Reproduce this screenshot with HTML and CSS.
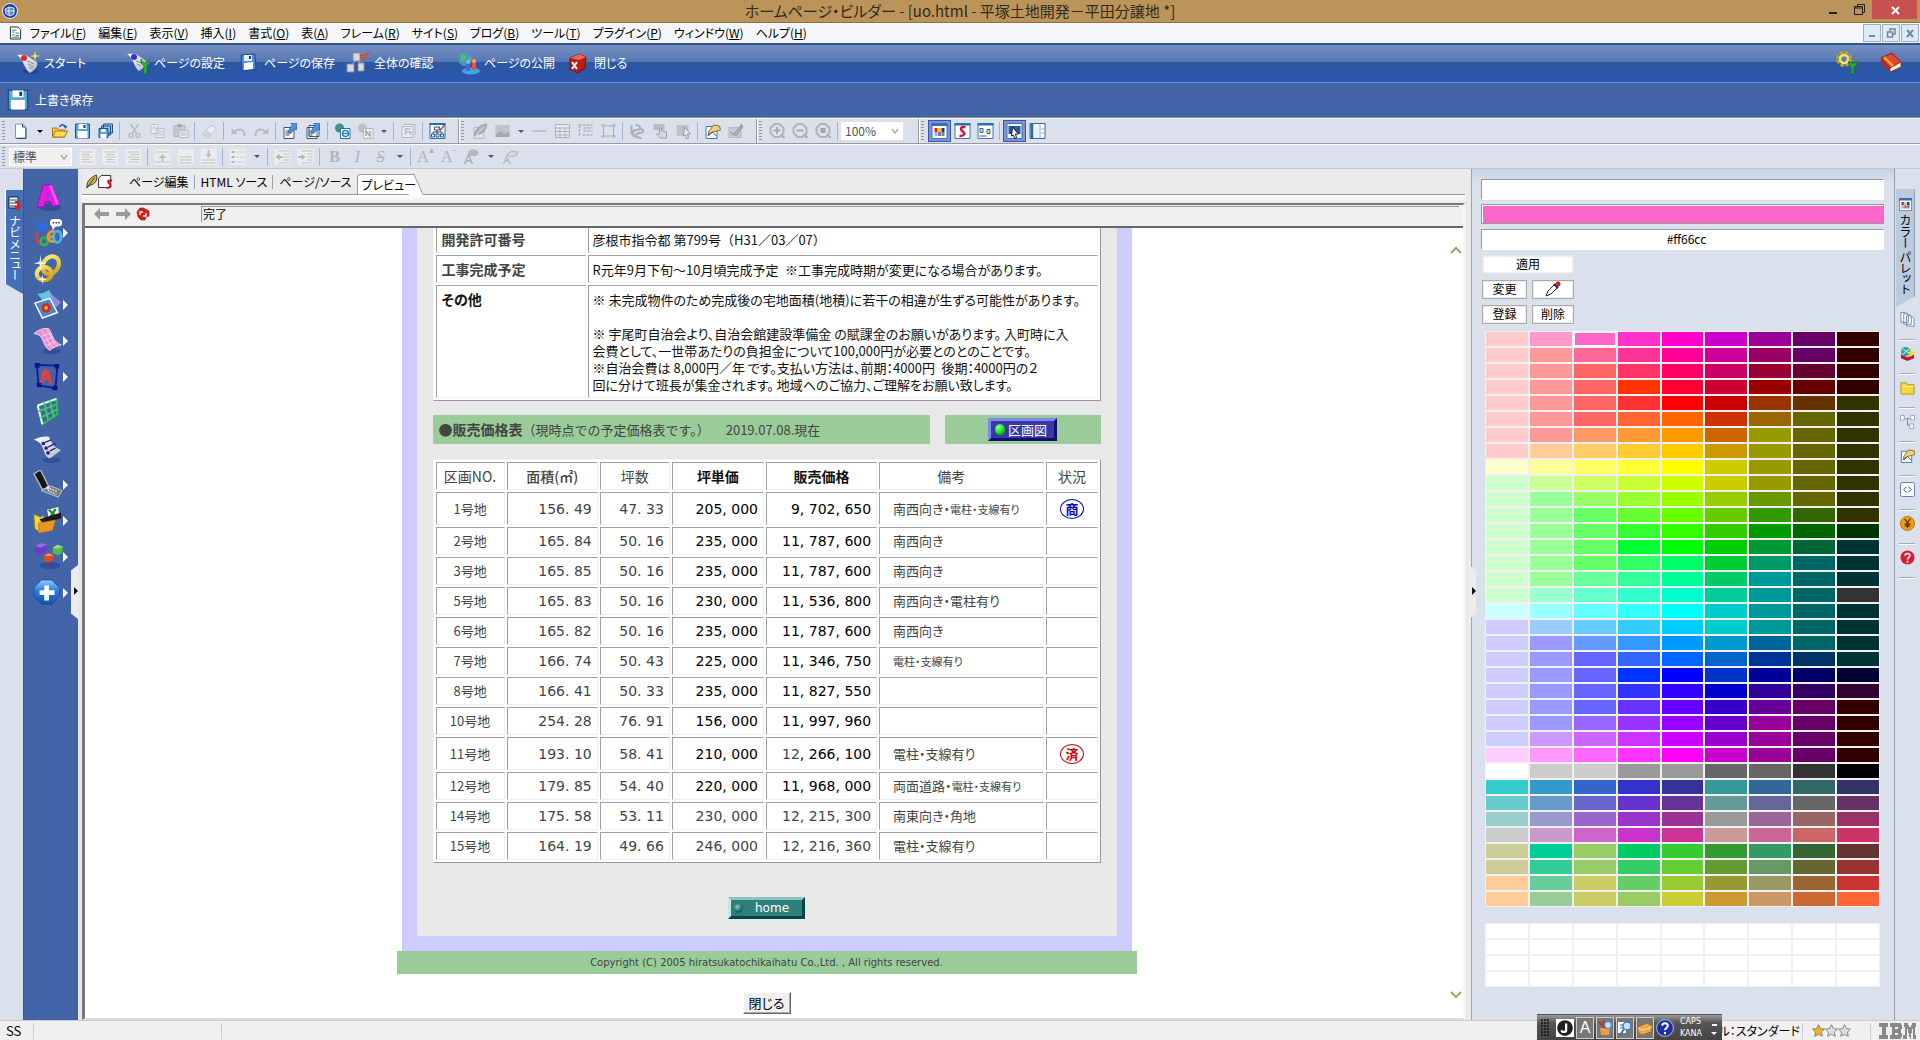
FILE: index.html
```html
<!DOCTYPE html>
<html lang="ja">
<head>
<meta charset="utf-8">
<title>ホームページ・ビルダー</title>
<link rel="stylesheet" href="styles.css">
</head>
<body>
<svg class="defs" aria-hidden="true">
  <defs>
    <linearGradient id="gold" x1="0" y1="0" x2="1" y2="1"><stop offset="0" stop-color="#fff07a"/><stop offset="1" stop-color="#c99a10"/></linearGradient>
    <linearGradient id="paper" x1="0" y1="0" x2="1" y2="1"><stop offset="0" stop-color="#fff"/><stop offset="1" stop-color="#b9bcc8"/></linearGradient>
    <linearGradient id="blueball" x1="0" y1="0" x2="0" y2="1"><stop offset="0" stop-color="#8fd0ff"/><stop offset=".45" stop-color="#2a7be0"/><stop offset="1" stop-color="#1250a8"/></linearGradient>
  </defs>
  <symbol id="floppy" viewBox="0 0 16 16"><path d="M1 1h14v14H1z" fill="#5aa8d8" stroke="#1c4f86"/><path d="M4 1h8v5H4z" fill="#fff"/><path d="M9 2h2v3H9z" fill="#1c2f66"/><path d="M3 8h10v7H3z" fill="#fff"/></symbol>
  <symbol id="doc" viewBox="0 0 16 16"><path d="M3 1h7l3 3v11H3z" fill="#fff" stroke="#7c98c0"/><path d="M10 1v3h3M13.500 5v10.500H4" fill="none" stroke="#2d4a78"/></symbol>
  <symbol id="open" viewBox="0 0 16 16"><path d="M1 5h5l1 2h6v7H1z" fill="#f6c94a" stroke="#a87808"/><path d="M1 14l3-6h12l-3 6z" fill="#ffd95e" stroke="#a87808"/><path d="M8 4c1-3 5-3 6 0" fill="none" stroke="#245a9c" stroke-width="1.500"/><path d="M12 3h4l-2 3z" fill="#245a9c"/></symbol>
  <symbol id="saveall" viewBox="0 0 16 16"><path d="M6 1h9v9H6zM4 3h9v9H4z" fill="#8cc6ea" stroke="#1c4f86"/><path d="M1.500 5.500h9v9h-9z" fill="#5aa8d8" stroke="#1c4f86"/><path d="M4 6h4v3H4zM3 11h6v4H3z" fill="#fff"/></symbol>
  <symbol id="cut" viewBox="0 0 16 16"><path d="M4 1l6 9M12 1L6 10" stroke="#b8bcc3" stroke-width="1.500"/><circle cx="4.500" cy="12.500" r="2" fill="none" stroke="#b8bcc3" stroke-width="1.500"/><circle cx="11.500" cy="12.500" r="2" fill="none" stroke="#b8bcc3" stroke-width="1.500"/></symbol>
  <symbol id="copy" viewBox="0 0 16 16"><path d="M1.500 1.500h7v9h-7zM6.500 5.500h8v9h-8z" fill="#eceef0" stroke="#bcc0c6"/><path d="M8 8h5M8 10h5M8 12h5M3 4h4M3 6h3" stroke="#bcc0c6"/></symbol>
  <symbol id="paste" viewBox="0 0 16 16"><path d="M1.500 2.500h11v11h-11z" fill="#c4c7cb" stroke="#b4b7bc"/><path d="M5 1h4v3H5z" fill="#a4a8ad"/><path d="M6.500 7.500h9v7h-9z" fill="#eee" stroke="#b4b8bf"/><path d="M8 10h6M8 12h6" stroke="#b4b8bf"/></symbol>
  <symbol id="eraser" viewBox="0 0 16 16"><path d="M1 11L10 2l5 4-9 9z" fill="#eee" stroke="#b9bcc2"/><path d="M1 11l4-4 5 4-4 4z" fill="#cfd2d6"/></symbol>
  <symbol id="undo" viewBox="0 0 16 16"><path d="M1 5v6h6z" fill="#b8bcc3"/><path d="M4 9c3-4 8-3 10 1v3" fill="none" stroke="#b8bcc3" stroke-width="2"/></symbol>
  <symbol id="redo" viewBox="0 0 16 16"><path d="M15 5v6H9z" fill="#b8bcc3"/><path d="M12 9C9 5 4 6 2 10v3" fill="none" stroke="#b8bcc3" stroke-width="2"/></symbol>
  <symbol id="export" viewBox="0 0 16 16"><path d="M1.500 4.500h10v11h-10z" fill="#fff" stroke="#3c567c"/><path d="M3 8h6M3 10h6M3 12h4" stroke="#3c567c"/><path d="M6 10c3 0 5-2 6-4l2 1V0H8l2 2C8 4 6 6 6 10z" fill="#4a94e4" stroke="#1d4c8c" stroke-width=".6"/></symbol>
  <symbol id="exportall" viewBox="0 0 16 16"><path d="M3.500 2.500h10v11h-10zM1.500 4.500h10v11h-10z" fill="#fff" stroke="#3c567c"/><path d="M3 8h6M3 10h6M3 12h4" stroke="#3c567c"/><path d="M6 10c3 0 5-2 6-4l2 1V0H8l2 2C8 4 6 6 6 10z" fill="#4a94e4" stroke="#1d4c8c" stroke-width=".6"/></symbol>
  <symbol id="ie" viewBox="0 0 16 16"><circle cx="5" cy="5" r="4.500" fill="#2f9a62"/><path d="M2 3l3 1-1 3" fill="none" stroke="#5b7de0" stroke-width="2"/><path d="M6 5.500h9.500v10H6z" fill="#fff" stroke="#3c6c9c"/><circle cx="11" cy="10.500" r="3" fill="none" stroke="#2a8ac8" stroke-width="1.600"/><path d="M8 10.500h6" stroke="#2a8ac8" stroke-width="1.400"/></symbol>
  <symbol id="nn" viewBox="0 0 16 16"><circle cx="5" cy="5" r="4.500" fill="#bcc0c5"/><path d="M6 5.500h9.500v10H6z" fill="#eee" stroke="#b4b8bf"/><path d="M8.500 13V8l4 5V8" fill="none" stroke="#a6aab0" stroke-width="1.500"/></symbol>
  <symbol id="frame" viewBox="0 0 16 16"><path d="M3 1.500h11.500V12M1.500 3.500h11v11h-11z" fill="#eceef0" stroke="#b4b8bf"/><path d="M5 12V6h5M5 9h4M10 12V8" fill="none" stroke="#b4b8bf" stroke-width="1.500"/></symbol>
  <symbol id="sitemap" viewBox="0 0 16 16"><path d="M.500.500h15v15H.500z" fill="#f4fbff" stroke="#2470b0"/><path d="M0 0h16v2H0z" fill="#2470b0"/><path d="M5 4h5v3H5zM2 11h3v3H2zM6.500 11h3v3h-3zM11 11h3v3h-3zM7.500 7v4M3.500 11V9h9v2" fill="none" stroke="#2d4f80"/><path d="M9 4l2 3 4-5" fill="none" stroke="#b0522c" stroke-width="1.500"/></symbol>
  <symbol id="leaf" viewBox="0 0 16 16"><path d="M2.500 4.500h10v11h-10z" fill="#dfe2e5" stroke="#b4b8bf"/><path d="M3 13C4 5 9 2 15 1c0 6-4 10-9 10z" fill="#b0b4b9" stroke="#9599a0"/><path d="M3 14L12 4" stroke="#ddd"/></symbol>
  <symbol id="image" viewBox="0 0 16 16"><path d="M1 2h14v12H1z" fill="#c0c3c7"/><path d="M1 12l5-4 4 3 5-2v5H1z" fill="#a4a7ac"/></symbol>
  <symbol id="rule" viewBox="0 0 16 16"><path d="M1 8h14" stroke="#b4b8bf" stroke-width="1.500"/></symbol>
  <symbol id="table" viewBox="0 0 16 16"><path d="M1 1.500h14v13H1zM1 5h14M1 8.500h14M1 12h14M5.500 4v11M10.500 4v11" fill="#e6e9ed" stroke="#b0b4ba"/></symbol>
  <symbol id="layout" viewBox="0 0 16 16"><path d="M1 2h14M2 2v12M6 5h9M6 8h9M5 12h10" fill="none" stroke="#b0b4ba" stroke-width="1.500" stroke-dasharray="3 1"/></symbol>
  <symbol id="bounds" viewBox="0 0 16 16"><path d="M3 3h10v10H3z" fill="none" stroke="#a9adb3"/><path d="M1 1h3v3H1zM12 1h3v3h-3zM1 12h3v3H1zM12 12h3v3h-3z" fill="#b9bcc0"/></symbol>
  <symbol id="links" viewBox="0 0 16 16"><path d="M2 2v8l4-3M6 2c6 0 6 5 1 5s-5 6 0 7M10 6c5 0 5 4 0 4s-4 5 2 5" fill="none" stroke="#adb1b6" stroke-width="2"/></symbol>
  <symbol id="hand" viewBox="0 0 16 16"><path d="M1 1h11v6H1z" fill="#b8bcc0"/><path d="M7 5v6H4l4 4h6V9L9 8V5z" fill="#d8dadd" stroke="#9da1a6"/></symbol>
  <symbol id="pointimg" viewBox="0 0 16 16"><path d="M1 2h12v11H1z" fill="#bec1c5"/><path d="M9 4l6 7h-3l1 4-2 1-1-4-2 1z" fill="#e8e8e8" stroke="#999"/></symbol>
  <symbol id="handwrite" viewBox="0 0 16 16"><path d="M1.500 3.500h11v12h-11z" fill="#fff" stroke="#3c7cb4"/><path d="M4 9l5-7 6 1 1 4-8 2-4 4z" fill="#f4cf70" stroke="#8c7040"/><path d="M3 12l5-3 4 4" fill="none" stroke="#2f5784"/></symbol>
  <symbol id="edit" viewBox="0 0 16 16"><path d="M1.500 4.500h12v10h-12z" fill="#c8cbd0" stroke="#b4b8bf"/><path d="M6 12l8-10 1 2-7 9M3 9l3 3" fill="none" stroke="#9da1a6" stroke-width="1.600"/></symbol>
  <symbol id="zoomin" viewBox="0 0 16 16"><path d="M5 1h5l4 4v5l-4 4H5l-4-4V5z" fill="#dfe3e8" stroke="#b0b4b9" stroke-width="2"/><path d="M7.500 4v7M4 7.500h7M12 12l3 3" stroke="#a8acb1" stroke-width="2"/></symbol>
  <symbol id="zoomout" viewBox="0 0 16 16"><path d="M5 1h5l4 4v5l-4 4H5l-4-4V5z" fill="#dfe3e8" stroke="#b0b4b9" stroke-width="2"/><path d="M4 7.500h7M12 12l3 3" stroke="#a8acb1" stroke-width="2"/></symbol>
  <symbol id="zoomfit" viewBox="0 0 16 16"><path d="M5 1h5l4 4v5l-4 4H5l-4-4V5z" fill="#dfe3e8" stroke="#b0b4b9" stroke-width="2"/><path d="M5 5h5v5H5z" fill="#a2a6ab"/><path d="M12 12l3 3" stroke="#a8acb1" stroke-width="2"/></symbol>
  <symbol id="palette" viewBox="0 0 16 16"><path d="M.500.500h15v15H.500z" fill="#fff" stroke="#3c78b0"/><path d="M0 0h16v3H0z" fill="#2d72b4"/><path d="M3 5h3v4H3z" fill="#d8202c"/><path d="M6.500 5h3v4h-3z" fill="#e8c820"/><path d="M10 5h3v4h-3z" fill="#1b2fb8"/><path d="M3 9h3v4H3z" fill="#70c8e8"/><path d="M6.500 9h3v4h-3z" fill="#c04cc0"/><path d="M10 9h3v4h-3z" fill="#48a840"/></symbol>
  <symbol id="stylesheet" viewBox="0 0 16 16"><path d="M.500.500h15v15H.500z" fill="#fff" stroke="#3c78b0"/><path d="M0 0h16v2.500H0z" fill="#2d72b4"/><path d="M11 4H8C5 5 7 8 9 9c2 2 0 4-4 4" fill="none" stroke="#d81038" stroke-width="2.400"/></symbol>
  <symbol id="parts" viewBox="0 0 16 16"><path d="M.500.500h15v15H.500z" fill="#fff" stroke="#3c78b0"/><path d="M0 0h16v2.500H0z" fill="#2d72b4"/><path d="M2.500 5.500h3v4h-3z" fill="#cfe6fa" stroke="#2d5f98"/><path d="M9.500 6.500h3v4h-3z" fill="#ece44c" stroke="#2d5f98"/><path d="M2 13h7" stroke="#2d5f98"/></symbol>
  <symbol id="pointer" viewBox="0 0 16 16"><path d="M.500.500h15v15H.500z" fill="#e9f2fb" stroke="#3c78b0"/><path d="M2 3h12v8H2z" fill="#31569a"/><path d="M6 4l6 7H9l1 4-2 .500L7 12l-2 1z" fill="#fff" stroke="#123"/></symbol>
  <symbol id="sidepane" viewBox="0 0 16 16"><path d="M.500.500h15v15H.500z" fill="#fff" stroke="#2c6ba8"/><path d="M1 1h3v14H1z" fill="#2c6ba8"/><path d="M4 1h6v14H4z" fill="#e8f2fb"/><path d="M10.500 1v14M11 6h4M11 10h4" stroke="#8fb4d8"/></symbol>
  <symbol id="al-left" viewBox="0 0 16 16"><path d="M0 0h16v16H0z" fill="#ececec"/><path d="M2 3h11M2 5.500h8M2 8h11M2 10.500h8M2 13h11" stroke="#c4c4c4"/></symbol>
  <symbol id="al-center" viewBox="0 0 16 16"><path d="M0 0h16v16H0z" fill="#ececec"/><path d="M2 3h12M4 5.500h8M2 8h12M4 10.500h8M3 13h10" stroke="#c4c4c4"/></symbol>
  <symbol id="al-right" viewBox="0 0 16 16"><path d="M0 0h16v16H0z" fill="#ececec"/><path d="M2 3h12M5 5.500h9M2 8h12M5 10.500h9M3 13h11" stroke="#c4c4c4"/></symbol>
  <symbol id="v-top" viewBox="0 0 16 16"><path d="M0 0h16v16H0z" fill="#ececec"/><path d="M1 3h14M1 13h14" stroke="#c0c0c0"/><path d="M8 5l4 4H9v3H7V9H4z" fill="#bdbdbd"/></symbol>
  <symbol id="v-mid" viewBox="0 0 16 16"><path d="M0 0h16v16H0z" fill="#ececec"/><path d="M2 8h12M2 11h12M2 14h12" stroke="#c0c0c0"/></symbol>
  <symbol id="v-bot" viewBox="0 0 16 16"><path d="M0 0h16v16H0z" fill="#ececec"/><path d="M1 11h14M1 14h14" stroke="#c0c0c0"/><path d="M8 9L5 5h2V1h2v4h2z" fill="#bdbdbd"/></symbol>
  <symbol id="list" viewBox="0 0 16 16"><path d="M0 0h16v16H0z" fill="#ececec"/><path d="M2 2h3v2H2zM2 7h3v2H2zM2 12h3v2H2z" fill="#b4b4b4"/><path d="M7 3h8M7 8h8M7 13h8" stroke="#c4c4c4" stroke-dasharray="2 1"/></symbol>
  <symbol id="outdent" viewBox="0 0 16 16"><path d="M0 0h16v16H0z" fill="#ececec"/><path d="M1 8l4-3v2h3v2H5v2z" fill="#b4b4b4"/><path d="M4 2h11M9 5h6M9 8h6M9 11h6M4 14h11" stroke="#c4c4c4"/></symbol>
  <symbol id="indent" viewBox="0 0 16 16"><path d="M0 0h16v16H0z" fill="#ececec"/><path d="M8 8L4 5v2H1v2h3v2z" fill="#b4b4b4"/><path d="M4 2h11M10 5h5M10 8h5M10 11h5M4 14h11" stroke="#c4c4c4"/></symbol>
  <symbol id="fontcolor" viewBox="0 0 16 16"><path d="M5 2c2-3 9-2 10 1 0 4-4 5-7 4l-4 1z" fill="#b5b8bc"/><path d="M1 15l4-9 4 9M3 12h5" fill="none" stroke="#adb1b6" stroke-width="1.500"/></symbol>
  <symbol id="nopaint" viewBox="0 0 16 16"><path d="M4 6l5-4 6 1v3L9 8z" fill="#d4d7da" stroke="#b0b4b9"/><path d="M1 15l3-7 4 7M3 12h4" fill="none" stroke="#b5b8bc" stroke-width="1.300"/></symbol>

  <symbol id="c-start" viewBox="0 0 24 24"><ellipse cx="15" cy="20" rx="8" ry="3" fill="#1a2f80" opacity=".5"/><path d="M1 4c4-1 9-1 12 2l8 5c1 4-2 8-7 11C8 18 8 9 1 4z" fill="url(#paper)" stroke="#8c8fa0" stroke-width=".5"/><path d="M11 10l7 3M12 13l6 3M13 16l4 2" stroke="#888"/><circle cx="8" cy="7" r="3" fill="#e02828"/><path d="M19 0l1 4 4 1-4 1-1 4-1-4-4-1 4-1z" fill="#f0e838"/></symbol>
  <symbol id="c-setup" viewBox="0 0 24 24"><path d="M1 3c4-1 9-1 12 2l7 5c0 4-2 7-7 10C8 17 8 8 1 3z" fill="url(#paper)" stroke="#8c8fa0" stroke-width=".5"/><path d="M10 10l6 2M11 13l4 2" stroke="#888"/><circle cx="8" cy="6" r="3" fill="#2c35d8"/><path d="M15 8v4l3 3v8h3v-8l3-3V8l-2 3-3 1-2-1z" fill="#2cb338" stroke="#0c7018" stroke-width=".6"/></symbol>
  <symbol id="c-floppy" viewBox="0 0 24 24"><path d="M5 4l14-1 1 15-14 2z" fill="#4a8ae8" stroke="#1d44a0"/><path d="M8 4h8v6H8z" fill="#e8f2ff"/><path d="M8 12l9-1v7l-9 1z" fill="#fff"/><path d="M13 5h2v3h-2z" fill="#1d44a0"/></symbol>
  <symbol id="c-check" viewBox="0 0 24 24"><path d="M10 9L5 15M12 9l4 6" stroke="#ccd"/><path d="M7 2h7v8H7zM1 13h7v8H1zM12 12h6v8h-6z" fill="#d8dbe4" stroke="#888c9c"/><path d="M14 4l3 5 6-8-5 4z" fill="#f05820" stroke="#d84010"/></symbol>
  <symbol id="c-publish" viewBox="0 0 24 24"><circle cx="9" cy="8" r="7" fill="#4c98b8"/><path d="M5 3l5 2-1 4-4 1zM11 8l4-2v5z" fill="#55c070"/><ellipse cx="15" cy="20" rx="9" ry="3.500" fill="#3aa5e8"/><path d="M10 12h4v8h-4z" fill="#4468d8"/><path d="M16 11h4v8h-4z" fill="#f05030"/><circle cx="18" cy="10" r="2" fill="#ff9878"/><circle cx="12" cy="11" r="2" fill="#88b0ff"/></symbol>
  <symbol id="c-close" viewBox="0 0 24 24"><path d="M4 7l9-4 7 3-1 11-7 5-8-4z" fill="#b81c18" stroke="#781010"/><path d="M4 7l9 2 7-3-7-3z" fill="#e86858"/><path d="M6 11l5 7M11 11l-5 7" stroke="#fff" stroke-width="2"/></symbol>
  <symbol id="c-gear" viewBox="0 0 24 24"><circle cx="9" cy="8" r="5.500" fill="none" stroke="#b8a820" stroke-width="5" stroke-dasharray="3 1.300"/><circle cx="9" cy="8" r="4" fill="none" stroke="#f0e468" stroke-width="2.500"/><path d="M14 10v4l2 2v7h3v-7l3-2v-4l-2 2h-4z" fill="#28a838" stroke="#0c6818" stroke-width=".6"/></symbol>
  <symbol id="c-book" viewBox="0 0 24 24"><path d="M2 7L13 2l9 9-11 6z" fill="#e04830" stroke="#901c10"/><path d="M2 7v5l9 9v-4z" fill="#b82818"/><path d="M11 17l11-6v5l-11 5z" fill="#f4ece0" stroke="#901c10" stroke-width=".7"/><path d="M5 6l9 9" stroke="#f0b820" stroke-width="2"/></symbol>

  <symbol id="n-logo" viewBox="0 0 32 32"><ellipse cx="18" cy="27" rx="12" ry="4" fill="#28408f" opacity=".6"/><path d="M4 27L11 3h9l8 20-7 4-2-6h-6l-1 5z" fill="#e41be4" stroke="#9a10a8"/><path d="M14 16l2-6 2 6z" fill="#4a64b0"/><path d="M20 3l8 20-3 2-8-21z" fill="#ff70f8" opacity=".6"/></symbol>
  <symbol id="n-chat" viewBox="0 0 32 32"><path d="M3 5h13v8H8l-3 3z" fill="#2c6be0"/><rect x="18" y="1" width="13" height="8" rx="4" fill="#fff"/><path d="M20 8l1 5 4-5z" fill="#fff"/><path d="M21 5h1.500M24 5h1.500M27 5h1.500" stroke="#222" stroke-width="1.500"/><g fill="none" stroke-width="3"><path d="M4 15v10h5" stroke="#e03838"/><circle cx="12" cy="25" r="4" stroke="#36b048"/><path d="M23 14c-9-1-9 12-1 11v-5h-4" stroke="#f09a28"/><ellipse cx="26" cy="20" rx="4" ry="6" stroke="#46b8e8"/></g></symbol>
  <symbol id="n-rings" viewBox="0 0 32 32"><g fill="none" stroke-width="4.500"><ellipse cx="19" cy="12" rx="8" ry="10" stroke="url(#gold)" transform="rotate(35 19 12)"/><ellipse cx="12" cy="21" rx="8" ry="7" stroke="url(#gold)"/></g><path d="M8 1l1 7 5 2-5 1-1 6-1-6-6-1 6-2zM10 22l1 4 4 1-4 1-1 4-1-4-4-1 4-1z" fill="#fff" opacity=".85"/></symbol>
  <symbol id="n-images" viewBox="0 0 32 32"><path d="M5 4c6 0 9-2 12-4 2 5 7 8 13 13l-5 5-12-5z" fill="#8c8ce0"/><path d="M5 4c6 0 9-2 12-4l3 7-10 4z" fill="#5fc8e8"/><path d="M2 14l16-5 8 15-16 6z" fill="#4c88d0" stroke="#fff" stroke-width="1.500"/><circle cx="14" cy="19" r="5" fill="#d02c20"/><circle cx="14" cy="19" r="2" fill="#f8c820"/></symbol>
  <symbol id="n-cloth" viewBox="0 0 32 32"><ellipse cx="20" cy="27" rx="10" ry="3" fill="#28408f" opacity=".6"/><path d="M1 8c6-5 12-6 16-5 4 6 4 14 13 17-4 1-9 3-12 6C9 21 13 9 1 8z" fill="#e890d0" stroke="#f8d8f0"/><path d="M9 6c8 5 5 13 13 17M14 4c7 5 5 14 12 17M9 11l10-3M11 16l10-4M14 21l10-4" stroke="#fbd0ee" fill="none"/></symbol>
  <symbol id="n-text" viewBox="0 0 32 32"><path d="M4 3l22 1-2 24-18-3z" fill="none" stroke="#121b9c" stroke-width="2"/><path d="M2 1h5v5H2zM23 2h5v5h-5zM4 22h5v5H4zM21 25h5v5h-5z" fill="#0c148c"/><path d="M7 22l4-14h5l5 15h-4l-1-4h-4l-1 3z" fill="#e84038"/><path d="M12 16l2-4 1 4z" fill="#4464a8"/></symbol>
  <symbol id="n-table" viewBox="0 0 32 32"><path d="M5 8L25 1l1 16-16 11z" fill="none" stroke="#24c048" stroke-width="2.200"/><path d="M5 8L25 1M5 8l5 20" stroke="#e8ffe8" stroke-width="2"/><path d="M6 14l19-7M8 21l18-9M12 5l4 18M18 3l4 17" stroke="#3cd060" stroke-width="1.800"/></symbol>
  <symbol id="n-list" viewBox="0 0 32 32"><ellipse cx="20" cy="28" rx="10" ry="3" fill="#28408f" opacity=".6"/><path d="M1 6c6-3 12-4 16-3 3 6 5 12 13 14l-12 9C9 22 14 10 1 6z" fill="url(#paper)"/><g fill="#24248c"><circle cx="11" cy="10" r="2"/><circle cx="14" cy="15" r="2"/><circle cx="16" cy="20" r="2"/></g><path d="M13 9l7-3M16 14l8-4M18 18l6-3" stroke="#24248c" stroke-width="1.500"/></symbol>
  <symbol id="n-phone" viewBox="0 0 32 32"><path d="M1 4l7-4 9 18-7 3z" fill="#151515" stroke="#b4b8bd" stroke-width="1.500"/><path d="M9 22l10-5 12 5-4 7z" fill="#77797d" stroke="#c8cbd0"/><path d="M18 20l8 3M16 22l9 4" stroke="#d8dbe0" stroke-dasharray="2 1" stroke-width="1.500"/><circle cx="16" cy="19" r="2" fill="#d4e2f8"/></symbol>
  <symbol id="n-folder" viewBox="0 0 32 32"><path d="M1 9l7 3 3-2 2 6-6 12-5-4z" fill="#f0d838" stroke="#a88010" stroke-width=".6"/><path d="M15 4l12-3 1 11-11 2z" fill="#e8f4e8"/><path d="M17 4l8 8M24 3l-6 10" stroke="#208c30" stroke-width="2.500"/><path d="M7 14l23-7v6L10 18z" fill="#1a1a1a"/><path d="M6 18l18-3-3 11-15 3z" fill="#e89828" stroke="#a86810" stroke-width=".6"/></symbol>
  <symbol id="n-cubes" viewBox="0 0 32 32"><ellipse cx="18" cy="25" rx="11" ry="4" fill="#28408f" opacity=".6"/><path d="M2 4l6-3 7 2-1 8-6 3-6-3z" fill="#6a3cc8"/><path d="M2 4l6 2 7-3-7-2z" fill="#9470e0"/><path d="M21 6l5-3 6 2-1 7-5 2-5-2z" fill="#58b848"/><path d="M21 6l5 1 6-2-6-2z" fill="#9cdc80"/><path d="M12 14l5-2 5 2-1 6-5 2-4-2z" fill="#e04c20"/><path d="M12 14l5 1 5-1-5-2z" fill="#ff9468"/></symbol>
  <symbol id="n-plus" viewBox="0 0 32 32"><path d="M9 2h11l8 8v10l-8 8H9l-8-8V10z" fill="url(#blueball)" stroke="#1450a8"/><path d="M12 8h5v5h6v5h-6v6h-5v-6H7v-5h5z" fill="#fff"/></symbol>

  <symbol id="s-pages" viewBox="0 0 16 16"><path d="M7 4h5l3 3v8H7zM4 2h5l3 3v8H4zM1 .500h5l3 3V11H1z" fill="#fff" stroke="#6c88b0"/></symbol>
  <symbol id="s-box" viewBox="0 0 16 16"><path d="M1 9l7 3 7-3v4l-7 3-7-3z" fill="#c01c1c"/><circle cx="6" cy="6" r="5" fill="#38a0b0"/><path d="M3 3l7 5M3 9l7-6" stroke="#e0f8ff"/><path d="M12 3v8M8 7h8" stroke="#f0e020" stroke-width="2"/></symbol>
  <symbol id="s-folder" viewBox="0 0 16 16"><path d="M1 3h6l1 2h7v10H1z" fill="#f6d838" stroke="#b89018"/><path d="M2 7h13" stroke="#fff49c"/></symbol>
  <symbol id="s-tree" viewBox="0 0 16 16"><path d="M5 5h3v7h3M8 5h3" fill="none" stroke="#6c88b0"/><path d="M.500 1.500h4v5h-4zM11.500 1.500h4v5h-4zM10.500 10.500h4v5h-4z" fill="#fff" stroke="#8ca8cc"/></symbol>
  <symbol id="s-code" viewBox="0 0 16 16"><rect x=".500" y=".500" width="15" height="15" rx="2" fill="#fff" stroke="#5c7898"/><path d="M7 5L4 8l3 3M9 5l3 3-3 3" fill="none" stroke="#1c3c94"/></symbol>
  <symbol id="s-yen" viewBox="0 0 16 16"><circle cx="8" cy="8" r="7.500" fill="#f0a018" stroke="#b87008"/><path d="M5 3l3 4 3-4M8 7v6M5 8.500h6M5 10.500h6" fill="none" stroke="#5c3000" stroke-width="1.400"/></symbol>
  <symbol id="s-help" viewBox="0 0 16 16"><circle cx="8" cy="8" r="7.500" fill="#d81c38"/><path d="M5.500 6c0-3 5-3 5 0 0 2-2.500 2-2.500 4M8 11.500v2" fill="none" stroke="#fff" stroke-width="1.800"/></symbol>
  <symbol id="star" viewBox="0 0 14 14"><path d="M7 .700l2 4.200 4.500.600-3.300 3.200.900 4.600L7 11.100l-4.100 2.200.900-4.600L.500 5.500 5 4.900z" fill="currentColor" stroke="#777" stroke-width=".9"/></symbol>
</svg>

<header class="title-bar">
  <svg class="app-icon" viewBox="0 0 16 16"><circle cx="8" cy="8" r="7.500" fill="#1c3f9c" stroke="#e8eefc"/><path d="M3 6l4-2 5 1v6l-4 2-4-2zM7 4v8M3 8h10" fill="#5c88d0" stroke="#fff" stroke-width=".8"/></svg>
  <h1>ホームページ・ビルダー - [uo.html - 平塚土地開発－平田分譲地 *]</h1>
  <div class="window-buttons">
    <button aria-label="最小化"><svg viewBox="0 0 16 12"><path d="M4 9h8" stroke="#222" stroke-width="2"/></svg></button>
    <button aria-label="元に戻す"><svg viewBox="0 0 16 12"><path d="M6.500 2.500V.500h7v8h-2M3.500 2.500h8v8h-8zM3.500 4h8" fill="none" stroke="#222"/></svg></button>
    <button class="win-close" aria-label="閉じる"><svg viewBox="0 0 16 12"><path d="M5 3l7 7M12 3l-7 7" stroke="#fff" stroke-width="2"/></svg></button>
  </div>
</header>

<nav class="menu-bar">
  <svg class="menu-icon" viewBox="0 0 14 14"><path d="M1.500.500h8l3 3v10h-11z" fill="#fff" stroke="#222"/><path d="M3 4h5M3 6h3M7 7h4M3 9h3M7 10h4M3 11.500h8" stroke="#286"/></svg>
  <a href="#">ファイル(<u>F</u>)</a><a href="#">編集(<u>E</u>)</a><a href="#">表示(<u>V</u>)</a><a href="#">挿入(<u>I</u>)</a><a href="#">書式(<u>O</u>)</a><a href="#">表(<u>A</u>)</a><a href="#">フレーム(<u>R</u>)</a><a href="#">サイト(<u>S</u>)</a><a href="#">ブログ(<u>B</u>)</a><a href="#">ツール(<u>T</u>)</a><a href="#">プラグイン(<u>P</u>)</a><a href="#">ウィンドウ(<u>W</u>)</a><a href="#">ヘルプ(<u>H</u>)</a>
  <div class="mdi-buttons">
    <button aria-label="子を最小化"><svg viewBox="0 0 12 12"><path d="M3 9h6" stroke="#7088a0" stroke-width="2"/></svg></button>
    <button aria-label="子を戻す"><svg viewBox="0 0 12 12"><path d="M5 4V2h5v5H8M2.500 5h5v5h-5z" fill="none" stroke="#7088a0" stroke-width="1.500"/></svg></button>
    <button aria-label="子を閉じる"><svg viewBox="0 0 12 12"><path d="M3 3l6 7M9 3l-6 7" stroke="#7088a0" stroke-width="2"/></svg></button>
  </div>
</nav>

<div class="main-bar">
  <button><svg><use href="#c-start"/></svg>スタート</button>
  <button><svg><use href="#c-setup"/></svg>ページの設定</button>
  <button><svg><use href="#c-floppy"/></svg>ページの保存</button>
  <button><svg><use href="#c-check"/></svg>全体の確認</button>
  <button><svg><use href="#c-publish"/></svg>ページの公開</button>
  <button><svg><use href="#c-close"/></svg>閉じる</button>
  <div class="main-bar-end">
    <svg><use href="#c-gear"/></svg><svg><use href="#c-book"/></svg>
  </div>
</div>
<div class="sub-bar"><button><svg><use href="#floppy"/></svg>上書き保存</button></div>

<div class="tool-row">
  <div class="tool-group">
    <i class="grip"></i>
    <button class="tool" aria-label="新規"><svg><use href="#doc"/></svg></button><i class="caret wide dark"></i>
    <button class="tool" aria-label="開く"><svg><use href="#open"/></svg></button>
    <button class="tool" aria-label="保存"><svg><use href="#floppy"/></svg></button>
    <button class="tool" aria-label="すべて保存"><svg><use href="#saveall"/></svg></button><i class="sep"></i>
    <button class="tool" aria-label="切り取り"><svg><use href="#cut"/></svg></button>
    <button class="tool" aria-label="コピー"><svg><use href="#copy"/></svg></button>
    <button class="tool" aria-label="貼り付け"><svg><use href="#paste"/></svg></button><i class="sep"></i>
    <button class="tool" aria-label="消去"><svg><use href="#eraser"/></svg></button><i class="sep"></i>
    <button class="tool" aria-label="元に戻す"><svg><use href="#undo"/></svg></button>
    <button class="tool" aria-label="やり直し"><svg><use href="#redo"/></svg></button><i class="sep"></i>
    <button class="tool" aria-label="転送"><svg><use href="#export"/></svg></button>
    <button class="tool" aria-label="すべて転送"><svg><use href="#exportall"/></svg></button><i class="sep"></i>
    <button class="tool" aria-label="ブラウザ"><svg><use href="#ie"/></svg></button>
    <button class="tool" aria-label="ブラウザ2"><svg><use href="#nn"/></svg></button><i class="caret"></i><i class="sep"></i>
    <button class="tool" aria-label="フレーム"><svg><use href="#frame"/></svg></button><i class="sep"></i>
    <button class="tool" aria-label="サイト"><svg><use href="#sitemap"/></svg></button>
  </div>
  <div class="tool-group">
    <i class="grip"></i>
    <button class="tool" aria-label="素材"><svg><use href="#leaf"/></svg></button>
    <button class="tool" aria-label="画像"><svg><use href="#image"/></svg></button><i class="caret"></i>
    <button class="tool" aria-label="水平線"><svg><use href="#rule"/></svg></button>
    <button class="tool" aria-label="表"><svg><use href="#table"/></svg></button>
    <button class="tool" aria-label="レイアウト"><svg><use href="#layout"/></svg></button>
    <button class="tool" aria-label="枠"><svg><use href="#bounds"/></svg></button><i class="sep"></i>
    <button class="tool" aria-label="リンク"><svg><use href="#links"/></svg></button>
    <button class="tool" aria-label="ロールオーバー"><svg><use href="#hand"/></svg></button>
    <button class="tool" aria-label="マップ"><svg><use href="#pointimg"/></svg></button><i class="sep"></i>
    <button class="tool" aria-label="属性"><svg><use href="#handwrite"/></svg></button>
    <button class="tool" aria-label="編集"><svg><use href="#edit"/></svg></button>
  </div>
  <div class="tool-group">
    <i class="grip"></i>
    <button class="tool" aria-label="拡大"><svg><use href="#zoomin"/></svg></button>
    <button class="tool" aria-label="縮小"><svg><use href="#zoomout"/></svg></button>
    <button class="tool" aria-label="全体"><svg><use href="#zoomfit"/></svg></button><i class="sep"></i>
    <select class="combo zoom" aria-label="倍率"><option>100%</option></select>
  </div>
  <div class="tool-group last">
    <i class="grip"></i>
    <button class="tool on" aria-label="カラーパレット"><svg><use href="#palette"/></svg></button>
    <button class="tool" aria-label="スタイル"><svg><use href="#stylesheet"/></svg></button>
    <button class="tool" aria-label="部品"><svg><use href="#parts"/></svg></button><i class="sep"></i>
    <button class="tool on" aria-label="選択"><svg><use href="#pointer"/></svg></button>
    <button class="tool" aria-label="サイド"><svg><use href="#sidepane"/></svg></button>
  </div>
</div>
<div class="tool-row format-row">
  <div class="tool-group last">
    <i class="grip"></i>
    <select class="combo para" aria-label="段落"><option>標準</option></select>
    <button class="tool" aria-label="左"><svg><use href="#al-left"/></svg></button>
    <button class="tool" aria-label="中央"><svg><use href="#al-center"/></svg></button>
    <button class="tool" aria-label="右"><svg><use href="#al-right"/></svg></button><i class="sep"></i>
    <button class="tool" aria-label="上"><svg><use href="#v-top"/></svg></button>
    <button class="tool" aria-label="中"><svg><use href="#v-mid"/></svg></button>
    <button class="tool" aria-label="下"><svg><use href="#v-bot"/></svg></button><i class="sep"></i>
    <button class="tool" aria-label="リスト"><svg><use href="#list"/></svg></button><i class="caret wide"></i><i class="sep"></i>
    <button class="tool" aria-label="字下げ解除"><svg><use href="#outdent"/></svg></button>
    <button class="tool" aria-label="字下げ"><svg><use href="#indent"/></svg></button><i class="sep"></i>
    <button class="tool letter bold">B</button>
    <button class="tool letter italic">I</button>
    <button class="tool letter strike">S</button><i class="caret wide"></i><i class="sep"></i>
    <button class="tool letter">A<sup>▴</sup></button>
    <button class="tool letter">A<sup>-</sup></button>
    <button class="tool" aria-label="文字色"><svg><use href="#fontcolor"/></svg></button><i class="caret wide"></i>
    <button class="tool" aria-label="書式解除"><svg><use href="#nopaint"/></svg></button>
  </div>
</div>

<main class="workspace">
  <aside class="nav-tabs">
    <button class="nav-tab"><svg viewBox="0 0 14 16"><path d="M1 1h9v11H1z" fill="#fff" stroke="#123"/><path d="M2 4h7M2 7h7M2 10h7" stroke="#235"/><path d="M7 5h5v5h2l-4 5-4-5h3V7H7z" fill="#d8202c"/></svg><span>ナビメニュー</span></button>
  </aside>
  <nav class="nav-icons">
    <button aria-label="ロゴ"><svg><use href="#n-logo"/></svg></button>
    <button class="more" aria-label="文字"><svg><use href="#n-chat"/></svg></button>
    <button aria-label="リンク"><svg><use href="#n-rings"/></svg></button>
    <button class="more" aria-label="画像"><svg><use href="#n-images"/></svg></button>
    <button class="more" aria-label="背景"><svg><use href="#n-cloth"/></svg></button>
    <button class="more" aria-label="枠文字"><svg><use href="#n-text"/></svg></button>
    <button aria-label="表"><svg><use href="#n-table"/></svg></button>
    <button aria-label="リスト"><svg><use href="#n-list"/></svg></button>
    <button class="more" aria-label="携帯"><svg><use href="#n-phone"/></svg></button>
    <button class="more" aria-label="ファイル"><svg><use href="#n-folder"/></svg></button>
    <button class="more" aria-label="部品"><svg><use href="#n-cubes"/></svg></button>
    <button class="more" aria-label="追加"><svg><use href="#n-plus"/></svg></button>
    <i class="splitter-handle"></i>
  </nav>

  <section class="editor">
    <div class="view-tabs">
      <svg class="view-icon" viewBox="0 0 30 18"><path d="M1 14C1 7 7 4 11 2c2 6-2 11-8 11l-2 3z" fill="#c8c040" stroke="#333"/><path d="M2 15L9 5" stroke="#333"/><path d="M13.500 5.500l3-3h10v13h-13z" fill="#fff" stroke="#222"/><path d="M28 8h-3c-3 1 0 3 1 4 1 2-1 4-4 4" fill="none" stroke="#d8101c" stroke-width="2.200"/></svg>
      <a href="#">ページ編集</a><a href="#">HTML ソース</a><a href="#">ページ/ソース</a>
      <a href="#" class="current">プレビュー</a>
    </div>
    <div class="tab-base"></div>
    <div class="browser">
      <div class="browser-bar">
        <svg viewBox="0 0 16 12"><path d="M0 6l6-6v4h9v4H6v4z" fill="#999"/></svg>
        <svg viewBox="0 0 16 12"><path d="M16 6l-6-6v4H1v4h9v4z" fill="#999"/></svg>
        <svg viewBox="0 0 14 14"><path d="M4 1h4l1 1 4 2v5l-3 1-1 3H5L2 10 1 5z" fill="#d81c1c" stroke="#901010" stroke-width=".6"/><path d="M4 8V5h3M10 6v3H7" fill="none" stroke="#fff" stroke-width="1.300"/></svg>
        <output>完了</output>
      </div>
      <div class="preview">
        <div class="preview-page">
          <div class="page-body">
            <div class="page-inner">
              <table class="grid info">
                <tr><th>開発許可番号</th><td class="full">彦根市指令都 第799号（H31／03／07）</td></tr>
                <tr><th>工事完成予定</th><td>R元年9月下旬～10月頃完成予定&ensp;※工事完成時期が変更になる場合があります。</td></tr>
                <tr class="tall"><th class="strong">その他</th><td>※ 未完成物件のため完成後の宅地面積(地積)に若干の相違が生ずる可能性があります。<br><br>※ 宇尾町自治会より、自治会館建設準備金 の賦課金のお願いがあります。 入町時に入<br>会費として、一世帯あたりの負担金について100,000円が必要とのとのことです。<br>※自治会費は 8,000円／年 です。支払い方法は、前期：4000円&ensp;後期：4000円の２<br>回に分けて班長が集金されます。 地域へのご協力、ご理解をお願い致します。</td></tr>
              </table>
              <div class="price-head">
                <h2><b>●販売価格表</b><span class="full">（現時点での予定価格表です。）</span><span class="as-of">2019.07.08.現在</span></h2>
                <div class="plan-box"><a href="#" class="plan-button"><i></i>区画図</a></div>
              </div>
              <table class="grid prices">
                <colgroup><col class="c-no"><col class="c-area"><col class="c-tsubo"><col class="c-unit"><col class="c-price"><col class="c-note"><col class="c-state"></colgroup>
                <thead><tr><th>区画NO.</th><th class="mid">面積(㎡)</th><th>坪数</th><th class="strong">坪単価</th><th class="strong">販売価格</th><th class="note">備考</th><th>状況</th></tr></thead>
                <tbody>
                <tr class="marked"><td>1号地</td><td>156. 49</td><td>47. 33</td><td>205, 000</td><td>9, 702, 650</td><td>南西向き・<small>電柱・支線有り</small></td><td><mark class="deal">商</mark></td></tr>
                <tr><td>2号地</td><td>165. 84</td><td>50. 16</td><td>235, 000</td><td>11, 787, 600</td><td>南西向き</td><td></td></tr>
                <tr><td>3号地</td><td>165. 85</td><td>50. 16</td><td>235, 000</td><td>11, 787, 600</td><td>南西向き</td><td></td></tr>
                <tr><td>5号地</td><td>165. 83</td><td>50. 16</td><td>230, 000</td><td>11, 536, 800</td><td>南西向き・電柱有り</td><td></td></tr>
                <tr><td>6号地</td><td>165. 82</td><td>50. 16</td><td>235, 000</td><td>11, 787, 600</td><td>南西向き</td><td></td></tr>
                <tr><td>7号地</td><td>166. 74</td><td>50. 43</td><td>225, 000</td><td>11, 346, 750</td><td><small>電柱・支線有り</small></td><td></td></tr>
                <tr><td>8号地</td><td>166. 41</td><td>50. 33</td><td>235, 000</td><td>11, 827, 550</td><td></td><td></td></tr>
                <tr><td>10号地</td><td>254. 28</td><td>76. 91</td><td>156, 000</td><td>11, 997, 960</td><td></td><td></td></tr>
                <tr class="marked"><td>11号地</td><td>193. 10</td><td>58. 41</td><td>210, 000</td><td><span class="soft">12</span>, 266, 100</td><td>電柱・支線有り</td><td><mark class="sold">済</mark></td></tr>
                <tr><td>12号地</td><td>179. 85</td><td>54. 40</td><td>220, 000</td><td>11, 968, 000</td><td>両面道路・<small>電柱・支線有り</small></td><td></td></tr>
                <tr class="soft"><td>14号地</td><td>175. 58</td><td>53. 11</td><td>230, 000</td><td>12, 215, 300</td><td>南東向き・角地</td><td></td></tr>
                <tr class="soft"><td>15号地</td><td>164. 19</td><td>49. 66</td><td>246, 000</td><td>12, 216, 360</td><td>電柱・支線有り</td><td></td></tr>
                </tbody>
              </table>
              <a href="#" class="home-button"><i></i>home</a>
            </div>
          </div>
          <footer>Copyright (C) 2005 hiratsukatochikaihatu Co.,Ltd. , All rights reserved.</footer>
          <button class="close-button">閉じる</button>
        </div>
        <div class="scroll-rail">
          <svg viewBox="0 0 12 8"><path d="M1 7l5-5 5 5" fill="none" stroke="#b09a70" stroke-width="2"/></svg>
          <svg viewBox="0 0 12 8"><path d="M1 1l5 5 5-5" fill="none" stroke="#b09a70" stroke-width="2"/></svg>
        </div>
      </div>
    </div>
    <i class="splitter-handle"></i>
  </section>

  <section class="color-panel">
    <input class="name-field" type="text" aria-label="色名">
    <div class="current-color"></div>
    <input class="code-field" type="text" value="#ff66cc" aria-label="色コード">
    <div class="color-actions">
      <button class="apply">適用</button>
      <button>変更</button><button aria-label="スポイト"><svg viewBox="0 0 16 16"><path d="M1 15l2-5 7-7 3 3-7 7z" fill="#fff" stroke="#222"/><path d="M9 3l4 4" stroke="#222" stroke-width="2"/><circle cx="13" cy="3" r="2.500" fill="#c02424"/></svg></button>
      <button>登録</button><button>削除</button>
    </div>
    <div class="swatches" id="swatches"></div>
    <div class="swatches custom" id="custom"></div>
  </section>

  <aside class="side-tabs">
    <button class="side-tab"><svg><use href="#palette"/></svg><span>カラー パレット</span></button>
    <button aria-label="ページ一覧"><svg><use href="#s-pages"/></svg></button>
    <button aria-label="素材"><svg><use href="#s-box"/></svg></button>
    <button aria-label="フォルダ"><svg><use href="#s-folder"/></svg></button>
    <button aria-label="サイト"><svg><use href="#s-tree"/></svg></button>
    <button aria-label="属性"><svg><use href="#handwrite"/></svg></button>
    <button aria-label="タグ"><svg><use href="#s-code"/></svg></button>
    <button aria-label="アフィリエイト"><svg><use href="#s-yen"/></svg></button>
    <button aria-label="ヘルプ"><svg><use href="#s-help"/></svg></button>
  </aside>
</main>

<footer class="status-bar">
  <span class="s-mode">SS</span><span class="s-info"></span>
  <span class="s-style">ル：スタンダード</span>
  <span class="s-stars"><svg class="gold"><use href="#star"/></svg><svg><use href="#star"/></svg><svg><use href="#star"/></svg></span>
  <span class="s-brand" role="img" aria-label="IBM"><svg viewBox="0 0 38 16"><path d="M1 1h9M1 3h9M4 5h4M4 7h4M4 9h4M4 11h4M1 13h9M1 15h9M12 1h11M12 3h12M14 5h3M20 5h4M14 7h9M14 9h9M14 11h3M20 11h4M12 13h12M12 15h11M26 1h4M34 1h4M26 3h5M33 3h5M27 5h10M27 7h2M30 7h4M35 7h2M27 9h2M30 9h4M35 9h2M27 11h2M31 11h2M35 11h2M25 13h4M31 13h2M35 13h3M25 15h4M32 15h1M35 15h3" stroke="#222" stroke-width="1.200"/></svg></span>
  <div class="ime-bar">
    <i class="dots"></i>
    <svg class="key" viewBox="0 0 16 16"><path d="M0 0h16v16H0z" fill="#fff"/><circle cx="8" cy="8" r="7" fill="#222"/><path d="M9 4v6c0 2-4 2-4 0" fill="none" stroke="#fff" stroke-width="2"/></svg>
    <b class="key boxed">A</b>
    <svg class="key boxed" viewBox="0 0 16 16"><path d="M3 8h10l-1 7H4z" fill="#e8a040"/><path d="M2 2l6 6M6 1l3 7" stroke="#d03020" stroke-width="2"/><circle cx="11" cy="5" r="3.500" fill="#b8e0ff" stroke="#3880d0"/></svg>
    <svg class="key boxed" viewBox="0 0 16 16"><path d="M1 2h8v11H1z" fill="#fff"/><path d="M3 5h4M3 8h3" stroke="#369"/><circle cx="10" cy="6" r="4" fill="#c4e4ff" stroke="#3878c8" stroke-width="1.500"/><path d="M7 9l-4 6" stroke="#3878c8" stroke-width="2"/></svg>
    <svg class="key boxed" viewBox="0 0 16 16"><path d="M1 7l9-4 5 3-1 6-9 3-4-3z" fill="#eba848" stroke="#a86c18"/><path d="M1 8l5 2 9-3" stroke="#fce0a0" fill="none"/></svg>
    <svg class="key" viewBox="0 0 16 16"><circle cx="8" cy="8" r="7.500" fill="#1c2cb0" stroke="#9ab"/><path d="M5.500 6c0-3 5-3 5 0 0 2-2.500 2-2.500 4M8 11.500v2" fill="none" stroke="#fff" stroke-width="1.800"/></svg>
    <div class="locks"><span>CAPS</span><span>KANA</span></div>
    <svg class="ime-end" viewBox="0 0 6 16"><path d="M1 5h5" stroke="#fff" stroke-width="2"/><path d="M0 12h6l-3 3z" fill="#fff"/></svg>
  </div>
</footer>
<script src="script.js"></script>
</body>
</html>
```
FILE: styles.css
```css
* { box-sizing: border-box; }
html, body { height: 100%; }
body {
  margin: 0;
  display: flex;
  flex-direction: column;
  overflow: hidden;
  background: #dae1ec;
  color: #000;
  font: 12px/16px "Noto Sans CJK JP", sans-serif;
  font-feature-settings: "palt";
}
button, input, select { font: inherit; font-feature-settings: inherit; color: inherit; margin: 0; padding: 0; border: 0; background: none; border-radius: 0; }
button { display: flex; align-items: center; justify-content: center; white-space: nowrap; }
a { color: inherit; text-decoration: none; }
h1, h2 { margin: 0; font-weight: 400; }
svg { display: block; flex: none; }
.defs { position: absolute; width: 0; height: 0; }
.full { font-feature-settings: normal; }

/* window frame */
.title-bar { display: flex; align-items: center; height: 23px; flex: none; background: #ba9459; border-bottom: 1px solid #8c7048; padding-left: 2px; }
.app-icon { width: 16px; height: 16px; }
.title-bar h1 { flex: 1; text-align: center; font-size: 15px; line-height: 22px; color: #33291b; padding-left: 82px; }
.window-buttons { display: flex; align-self: flex-start; padding-right: 3px; }
.window-buttons button { width: 26px; height: 19px; }
.window-buttons svg { width: 16px; height: 12px; }
.window-buttons .win-close { width: 45px; background: #c75050; }

.menu-bar { display: flex; align-items: center; gap: 12px; height: 20px; flex: none; background: #f5f7fa; padding-left: 9px; }
.menu-icon { width: 13px; height: 14px; margin-right: -4px; }
.menu-bar a { white-space: nowrap; }
.mdi-buttons { display: flex; gap: 1px; margin-left: auto; padding-right: 1px; }
.mdi-buttons button { width: 18px; height: 18px; border: 1px solid #a0b0c0; background: #dfeaf7; }
.mdi-buttons svg { width: 12px; height: 12px; }

.main-bar { display: flex; align-items: center; height: 40px; flex: none; padding: 0 0 2px 16px; color: #fff; border-top: 2px solid #2f5390; border-bottom: 1px solid #6a92d8;
  background: linear-gradient(#7790c2 0, #5576b3 17px, #2e57a2 17px, #2a58ae 100%); }
.main-bar button { width: 110px; justify-content: flex-start; gap: 4px; }
.main-bar svg { width: 24px; height: 24px; }
.main-bar-end { display: flex; gap: 20px; margin-left: auto; padding-right: 17px; }
.sub-bar { display: flex; align-items: center; height: 35px; flex: none; padding-left: 7px; background: #4365a7; color: #fff; border-bottom: 1px solid #8a9096; }
.sub-bar button { gap: 6px; }
.sub-bar svg { width: 22px; height: 22px; }

/* toolbars */
.tool-row { display: flex; height: 26px; flex: none; background: #dae1ec; border-top: 1px solid #fff; border-bottom: 1px solid #999; }
.format-row { height: 25px; border-bottom: 1px solid #c3c8ca; }
.tool-group { display: flex; align-items: center; padding: 0 9px 0 2px; border-right: 1px solid #999; box-shadow: 1px 0 #fff; }
.tool-group.last { border: 0; box-shadow: none; }
.grip { width: 3px; height: 20px; margin-right: 4px; background: repeating-linear-gradient(#8f98a5 0 1px, transparent 1px 3px); }
.tool { width: 23px; height: 22px; }
.tool svg { width: 17px; height: 16px; }
.tool.on { background: #8092d0; border: 1px solid #3454b0; }
.sep { width: 1px; height: 18px; margin: 0 3px 0 2px; background: #9fb4cf; }
.caret { width: 14px; display: flex; justify-content: center; }
.caret::after { content: ""; border: 3px solid transparent; border-top-color: #555; border-bottom: 0; }
.caret.wide { width: 16px; }
.caret.dark::after { border-top-color: #000; }
.tool-group .combo { height: 18px; border: 1px solid #fff; appearance: none; color: #555; padding: 0 3px; line-height: 14px; }
.combo.zoom { width: 62px; margin-right: 6px; background: #fff url("data:image/svg+xml,%3Csvg xmlns='http://www.w3.org/2000/svg' viewBox='0 0 8 6'%3E%3Cpath d='M1 1l3 4 3-4' fill='none' stroke='%23aaa' stroke-width='1.500'/%3E%3C/svg%3E") no-repeat right 3px center / 8px 6px; }
.combo.para { width: 63px; margin-right: 4px; background: #f0f0f0 url("data:image/svg+xml,%3Csvg xmlns='http://www.w3.org/2000/svg' viewBox='0 0 8 6'%3E%3Cpath d='M1 1l3 4 3-4' fill='none' stroke='%23aaa' stroke-width='1.500'/%3E%3C/svg%3E") no-repeat right 3px center / 8px 6px; }
.letter { font: 16px/20px "Liberation Serif", serif; color: #b0b4ba; }
.letter sup { font-size: 10px; line-height: 8px; align-self: flex-start; }
.bold { font-weight: 700; }
.italic { font-style: italic; }
.strike { font-style: italic; text-decoration: line-through; }

/* workspace */
.workspace { display: flex; flex: 1; min-height: 0; }
.nav-tabs { width: 23px; padding: 21px 0 0 5px; background: #dae1ec; }
.nav-tab { width: 18px; height: 104px; flex-direction: column; justify-content: flex-start; gap: 4px; padding-top: 6px; color: #fff; background: #4470b8; border-left: 1px solid #fff; clip-path: polygon(0 0, 100% 0, 100% 100%, 0 90%); }
.nav-tab svg { width: 14px; height: 16px; }
.nav-tab span, .side-tab span { writing-mode: vertical-rl; line-height: 14px; font-feature-settings: "vpal"; }
.nav-icons { position: relative; width: 59px; flex: none; padding: 10px 5px 0 0; background: linear-gradient(90deg, #4365a7 0 54px, #e3e8ef 54px); border-left: 1px solid #2d5aa4; }
.nav-icons button { width: 54px; height: 36px; position: relative; }
.nav-icons svg { width: 30px; height: 30px; margin-right: 6px; }
.nav-icons .more::after { content: ""; position: absolute; right: 10px; top: 13px; border: 5px solid transparent; border-left-color: #fff; border-right: 0; }
.splitter-handle { position: absolute; top: 396px; right: 4px; width: 7px; height: 54px; background: #ececec; clip-path: polygon(0 10%, 100% 0, 100% 100%, 0 90%); }
.splitter-handle::after { content: ""; position: absolute; left: 3px; top: 22px; border: 4px solid transparent; border-left-color: #111; border-right: 0; }

.editor { position: relative; flex: 1; min-width: 0; display: flex; flex-direction: column; padding-right: 6px; background: #ebebeb; border-right: 1px solid #a0a4a8; }
.editor .splitter-handle { right: -5px; z-index: 2; clip-path: polygon(0 0, 100% 10%, 100% 90%, 0 100%); }
.view-tabs { display: flex; align-items: center; height: 25px; flex: none; padding-left: 4px; }
.view-icon { width: 28px; height: 17px; margin-right: 9px; }
.view-tabs a { line-height: 14px; padding: 0 5px 0 6px; border-right: 1px solid #9aa4b0; white-space: nowrap; }
.view-tabs a:nth-of-type(3) { border: 0; }
.view-tabs .current { position: relative; align-self: flex-end; width: 56px; padding: 2px 0 1px 4px; line-height: 16px; background: #fff; border: 1px solid #999; border-width: 1px 0 0 1px; border-radius: 4px 0 0 0; }
.current::after { content: ""; position: absolute; z-index: -1; top: -1px; right: -6px; width: 14px; height: 20px; background: #fff; border: 1px solid #999; border-width: 1px 1px 0 0; transform: skewX(25deg); }
.view-tabs .current { z-index: 0; }
.tab-base { height: 9px; flex: none; border-top: 1px solid #999; background: linear-gradient(#fff, #ececec); }
.browser { flex: 1; min-height: 0; display: flex; flex-direction: column; border: 2px solid #777; border-left-width: 3px; border-right-color: #f8f8f8; border-bottom-color: #ddd; background: #f0f0f0; }
.browser-bar { display: flex; align-items: center; height: 23px; flex: none; gap: 5px; padding: 0 4px 3px 9px; border-bottom: 2px solid #666; }
.browser-bar svg { width: 16px; height: 12px; }
.browser-bar svg:nth-child(3) { width: 14px; height: 14px; }
.browser-bar output { flex: 1; height: 16px; margin-left: 46px; line-height: 14px; padding-left: 1px; border: 1px solid #999; border-width: 1px 0 0 1px; }
.preview { display: flex; flex: 1; min-height: 0; background: #fff; overflow: hidden; }
.preview-page { flex: 1; display: flex; flex-direction: column; align-items: center; }
.scroll-rail { width: 15px; display: flex; flex-direction: column; justify-content: space-between; align-items: center; padding: 18px 0 19px; }
.scroll-rail svg { width: 12px; height: 8px; }

/* previewed page */
.page-body { width: 730px; padding: 0 15px 15px; background: #ccf; }
.page-inner { padding: 0 16px 17px; background: #e8e8e8; display: flex; flex-direction: column; }
.grid { table-layout: fixed; width: 668px; border-spacing: 2px; background: #fff; border: 1px solid #999; border-color: #f4f4f4 #999 #999 #f4f4f4; }
.grid th, .grid td { border: 1px solid; border-color: #a0a0a0 #eee #eee #a0a0a0; padding: 0 5px; font-weight: 400; white-space: nowrap; }
.info { margin-top: -6px; font-size: 13px; line-height: 17px; }
.info tr { height: 28px; }
.info tr.tall { height: 113px; }
.info th { width: 150px; text-align: left; font-size: 14px; font-weight: 700; color: #444; padding-left: 5px; }
.info .strong, .info td { color: #111; }
.info .tall > * { vertical-align: top; padding-top: 5px; }
.info td { padding-left: 4px; }
.price-head { display: flex; gap: 15px; margin: 14px 0 15px; }
.price-head h2 { flex: 1; height: 29px; padding-left: 6px; background: #9c9; color: #444; font-size: 13px; line-height: 29px; white-space: nowrap; }
.price-head b { font-size: 14px; font-weight: 700; }
.price-head .as-of { margin-left: 16px; }
.plan-box { width: 156px; display: flex; align-items: center; justify-content: center; background: #9c9; }
.plan-button { display: flex; align-items: center; gap: 3px; height: 23px; width: 69px; padding-left: 4px; border: 3px solid; border-color: #8088e8 #10106c #10106c #8088e8; background: #3838a8; color: #fff; font-size: 13px; line-height: 17px; white-space: nowrap; }
.plan-button i { width: 10px; height: 11px; border-radius: 50%; background: radial-gradient(circle at 35% 30%, #9f9, #0d0 60%, #080); }
.prices { color: #444; font-size: 13px; line-height: 16px; }
.prices tr { height: 28px; }
.prices tr.marked { height: 33px; }
.c-no { width: 69px; } .c-area { width: 91px; } .c-tsubo { width: 70px; } .c-unit { width: 92px; } .c-price { width: 111px; } .c-note { width: 165px; } .c-state { width: 51px; }
.prices th { font-size: 14px; }
.prices .note { padding-right: 26px; }
.prices .mid { font-weight: 500; }
.prices .strong { font-weight: 700; color: #111; }
.prices td { text-align: right; font-family: "DejaVu Sans", "Noto Sans CJK JP", sans-serif; }
.prices td:nth-child(1) { text-align: center; font-family: "Noto Sans CJK JP", sans-serif; }
.prices td:nth-child(2), .prices td:nth-child(3), .prices td:nth-child(4), .prices td:nth-child(5) { font-size: 14px; }
.prices td:nth-child(4), .prices td:nth-child(5) { color: #000; }
.prices .soft, .prices .soft td:nth-child(n) { color: #444; }
.prices td:nth-child(6) { text-align: left; padding-left: 13px; font-family: "Noto Sans CJK JP", sans-serif; }
.prices td:nth-child(7) { padding: 0; text-align: center; }
.prices small { font-size: 11px; }
.prices mark { display: inline-block; width: 24px; height: 20px; border: 1px solid; border-radius: 50%; background: none; font: 700 13px/18px "Noto Sans CJK JP", sans-serif; vertical-align: middle; }
.prices .deal { color: #00c; }
.prices .sold { color: #c00; }
.home-button { align-self: center; display: flex; align-items: center; gap: 12px; width: 77px; height: 22px; margin-top: 34px; padding-left: 3px; border: 3px solid; border-color: #8cc4c0 #004844 #004844 #c8e8e4; background: #2f807c; color: #fff; font: 12px/14px "DejaVu Sans", sans-serif; }
.home-button i { width: 9px; height: 9px; border-radius: 50%; background: radial-gradient(circle at 35% 30%, #8cd0c8, #146460 60%); }
.preview-page footer { width: 740px; height: 23px; background: #9c9; color: #444; text-align: center; font: 10px/24px "DejaVu Sans", sans-serif; }
.close-button { width: 48px; height: 22px; margin-top: 18px; font-size: 13px; background: #f0f0f0; border: 1px solid; border-color: #fff #666 #666 #fff; box-shadow: inset -1px -1px #aaa; }

/* colour palette panel */
.color-panel { width: 423px; flex: none; padding: 10px 10px 0 9px; background: linear-gradient(#c5d3e6, #dae1ec 14px); border-right: 1px solid #8f9cb0; margin-right: 1px; }
.color-panel input { display: block; width: 100%; height: 21px; background: #fff; border: 1px solid #999; border-color: #999 #fff #fff #999; text-align: center; }
.color-panel .code-field { padding: 0 0 2px 8px; }
.current-color { height: 20px; margin: 4px 0 5px; background: #f6c; border: 1px solid #999; box-shadow: inset 1px 1px #fff; }
.color-actions { display: grid; grid-template-columns: 45px 42px; grid-auto-rows: 19px; gap: 6px 5px; margin: 5px 0 0 1px; }
.color-actions button { background: #fff; border: 1px solid #aaa; box-shadow: inset 0 0 0 1px #eee; padding-bottom: 1px; }
.color-actions .apply { grid-column: 1 / 3; border-color: #e4e4e4; }
.color-actions svg { width: 16px; height: 16px; }
.swatches { display: grid; grid-template-columns: repeat(9, 1fr); grid-auto-rows: 14px; gap: 2px; margin: 7px 4px 0; padding: 1px; background: #f0f0f0; }
.swatches button { display: block; }
.swatches .picked { border: 1px solid #fff; outline: 1px solid #fff; }
.swatches.custom { margin-top: 16px; }
.custom button { background: #fff; }

.side-tabs { width: 24px; flex: none; display: flex; flex-direction: column; padding-top: 20px; }
.side-tab { width: 19px; height: 118px; flex-direction: column; justify-content: flex-start; gap: 4px; padding-top: 9px; background: #bccade; border-right: 1px solid #8f9cb0; clip-path: polygon(0 0, 100% 0, 100% 91%, 0 100%); }
.side-tabs svg { width: 15px; height: 15px; }
.side-tabs .side-tab svg { width: 13px; height: 13px; }
.side-tabs button:not(.side-tab) { height: 33px; margin: 0 5px 1px 3px; padding-bottom: 7px; border-bottom: 1px solid #aaa; box-shadow: 0 1px #fff; }

/* status bar */
.status-bar { position: relative; display: flex; align-items: center; height: 20px; flex: none; background: #f0f0f0; border-top: 1px solid #ccc; }
.status-bar > span { height: 16px; border-right: 1px solid #ccc; white-space: nowrap; }
.s-mode { width: 34px; padding-left: 6px; font-size: 13px; }
.s-info { width: 188px; }
.status-bar .s-style { margin-left: auto; padding-right: 2px; }
.s-stars { display: flex; width: 68px; padding: 1px 0 0 9px; color: #ddd; }
.s-stars svg { width: 13px; height: 13px; }
.s-stars .gold { color: #e8b820; }
.status-bar .s-brand { width: 49px; padding-left: 7px; border: 0; }
.s-brand svg { width: 38px; height: 16px; }
.ime-bar { position: absolute; right: 198px; bottom: 0; width: 185px; height: 26px; display: flex; align-items: center; gap: 2px; padding: 0 5px 0 4px; background: linear-gradient(#999 0, #555 8px, #444); border-top: 1px solid #555; color: #fff; }
.dots { width: 8px; height: 18px; margin-right: 5px; background: radial-gradient(circle at 1px 1px, #222 1px, transparent 1px) 0 0 / 3px 3px; }
.key { width: 18px; height: 18px; }
.key.boxed { height: 22px; border: 1px solid #ccc; background: #777; }
b.key { font: 16px/20px "Liberation Sans", sans-serif; text-align: center; }
.locks { flex: 1; display: flex; flex-direction: column; gap: 2px; padding-left: 4px; font: 8px/10px "DejaVu Sans", sans-serif; }
.ime-end { width: 6px; height: 18px; }
```
FILE: script.js
```js
// Palette rows, nine colours each, in three-digit web-safe notation.
const rows = `fcc f9c f6c f3c f0c c0c 909 606 300
fcc f99 f69 f39 f09 c09 906 606 300
fcc f99 f66 f36 f06 c06 903 603 300
fcc f99 f66 f30 f03 c03 900 600 300
fcc f99 f66 f33 f00 c00 930 630 330
fcc f99 f66 f63 f60 c30 960 660 330
fcc f99 f96 f93 f90 c60 990 660 330
fcc fc9 fc6 fc3 fc0 c90 990 660 330
ffc ff9 ff6 ff3 ff0 cc0 990 660 330
cfc cf9 cf6 cf3 cf0 cc0 990 660 330
cfc 9f9 9f6 9f3 9f0 9c0 690 660 330
cfc 9f9 6f6 6f3 6f0 6c0 390 360 330
cfc 9f9 6f6 3f3 3f0 3c0 090 060 030
cfc 9f9 6f6 0f3 0f0 0c0 093 063 033
cfc 9f9 6f6 3f6 0f6 0c3 096 066 033
cfc 9f9 6f9 3f9 0f9 0c6 099 066 033
cfc 9fc 6fc 3fc 0fc 0c9 099 066 333
cff 9ff 6ff 3ff 0ff 0cc 099 066 033
ccf 9cf 6cf 3cf 0cf 0cc 099 066 033
ccf 99f 69f 39f 09f 09c 069 066 033
ccf 99f 66f 36f 06f 06c 039 036 033
ccf 99f 66f 03f 00f 03c 009 006 003
ccf 99f 66f 33f 30f 00c 309 306 303
ccf 99f 66f 63f 60f 30c 609 606 300
ccf 99f 96f 93f 90f 60c 909 606 300
ccf c9f c6f c3f c0f 90c 909 606 300
fcf f9f f6f f3f f0f c0c 909 606 300
fff ccc ccc 999 999 666 666 333 000
3cc 39c 36c 33c 339 399 369 366 336
6cc 69c 66c 63c 639 699 669 666 636
9cc 99c 96c 93c 939 999 969 966 936
ccc c9c c6c c3c c39 c99 c69 c66 c36
cc9 0c9 9c6 0c6 3c3 393 396 363 633
cc9 3c9 9c6 3c6 6c3 693 696 663 933
fc9 6c9 cc6 6c6 9c3 993 996 963 c33
fc9 9c9 cc6 9c6 cc3 c93 c96 c63 f63`;

function addSwatch(parent, color, label) {
  const b = document.createElement("button");
  b.setAttribute("aria-label", label);
  if (color) b.style.background = color;
  parent.append(b);
  return b;
}

const palette = document.getElementById("swatches");
rows.split(/\s+/).forEach((c, i) => {
  const b = addSwatch(palette, "#" + c, "#" + c);
  if (i === 2) b.className = "picked";
});
const custom = document.getElementById("custom");
for (let i = 0; i < 36; i++) addSwatch(custom, "", "空き " + (i + 1));
```
